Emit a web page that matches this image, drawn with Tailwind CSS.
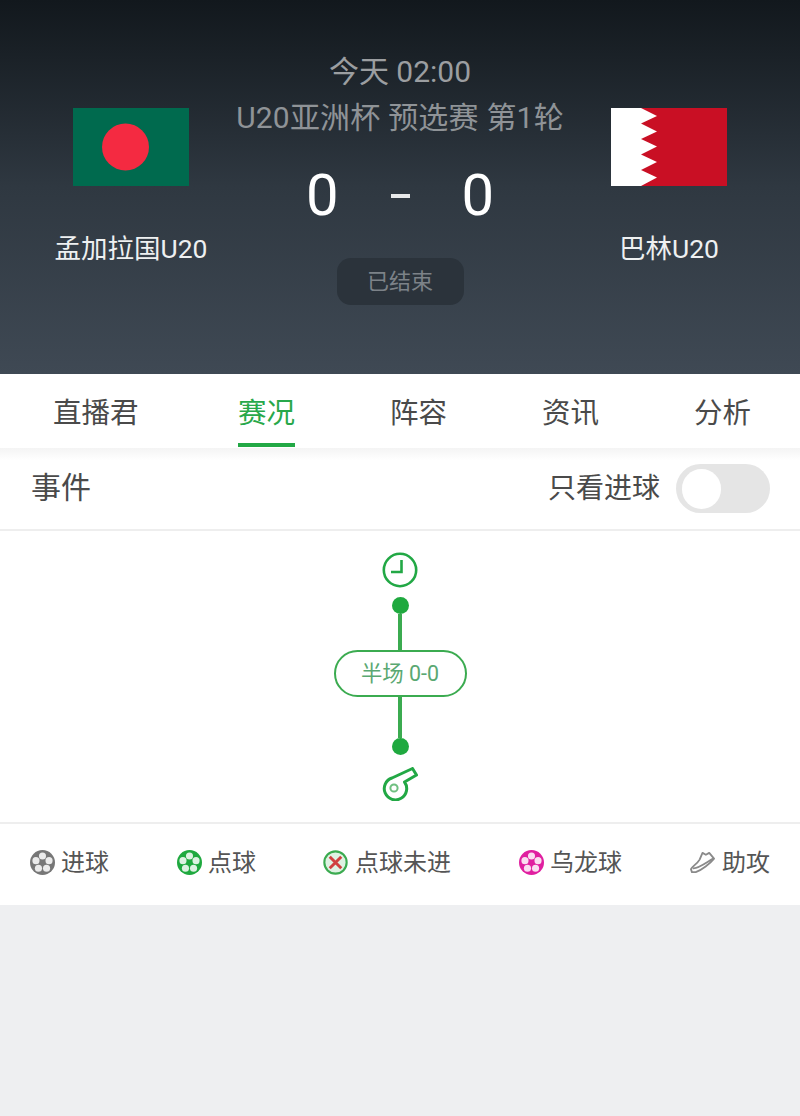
<!DOCTYPE html>
<html>
  <head>
    <title>Match</title>
    <meta charset="UTF-8" />
    <meta name="viewport" content="width=device-width, initial-scale=1.0" />
    <script src="https://cdn.jsdelivr.net/npm/@tailwindcss/browser@4"></script>
  </head>
  <body class="bg-[#eeeff1] h-[1116px] overflow-hidden font-['Roboto','Noto_Sans_CJK_SC',sans-serif]">
    <svg class="hidden">
      <symbol id="ball" viewBox="0 0 26 26">
        <circle cx="13" cy="13" r="13" fill="currentColor" />
        <circle cx="13" cy="6.2" r="3.7" fill="#fff" opacity="0.85" />
        <circle cx="19.8" cy="11.1" r="3.7" fill="#fff" opacity="0.85" />
        <circle cx="17.2" cy="19" r="3.7" fill="#fff" opacity="0.85" />
        <circle cx="8.8" cy="19" r="3.7" fill="#fff" opacity="0.85" />
        <circle cx="6.2" cy="11.1" r="3.7" fill="#fff" opacity="0.85" />
      </symbol>
    </svg>

    <!-- match header -->
    <header class="h-[374px] flex bg-gradient-to-b from-[#12181d] via-[#2f3841] via-50% to-[#3f4954]">
      <div class="w-[262px] shrink-0 flex flex-col items-center pt-[108px]">
        <svg class="w-[116px] h-[78px]" viewBox="0 0 116 78">
          <rect width="116" height="78" fill="#006a4e" />
          <circle cx="52.5" cy="39" r="23.5" fill="#f42a41" />
        </svg>
        <p class="mt-[45px] text-[26.5px] leading-[36px] text-[#eef0f1] whitespace-nowrap">孟加拉国U20</p>
      </div>
      <div class="w-[276px] shrink-0 flex flex-col items-center pt-[52px]">
        <p class="text-[30px] leading-[40px] text-[#9b9ea1] whitespace-nowrap">今天 02:00</p>
        <p class="mt-[6px] text-[30px] tracking-[0.2px] leading-[40px] text-[#8f9397] whitespace-nowrap">U20亚洲杯 预选赛 第1轮</p>
        <div class="mt-[22px] h-[70px] w-[188px] flex items-center justify-between text-white text-[58px] leading-[70px]">
          <span>0</span><span class="w-[19px] h-[4px] mt-[2px] bg-[#e8e9ea]"></span><span>0</span>
        </div>
        <div class="mt-[28px] w-[127px] h-[47px] rounded-[14px] bg-[#2b333b] flex items-center justify-center text-[22px] text-[#7c8288]">已结束</div>
      </div>
      <div class="w-[262px] shrink-0 flex flex-col items-center pt-[108px]">
        <svg class="w-[116px] h-[78px]" viewBox="0 0 116 78">
          <rect width="116" height="78" fill="#c90f24" />
          <polygon points="0,0 30,0 46,8 30,15.6 46,23.4 30,31 46,38.6 30,46.4 46,54 30,62 46,69.6 30,78 0,78" fill="#fff" />
        </svg>
        <p class="mt-[45px] text-[26.5px] leading-[36px] text-[#eef0f1] whitespace-nowrap">巴林U20</p>
      </div>
    </header>

    <!-- tabs -->
    <nav class="h-[74px] bg-white flex pl-[53px] gap-[95px] text-[28.5px] text-[#4a4a4a]">
      <a class="mr-[4.5px] pt-[20px] leading-[40px] whitespace-nowrap">直播君</a>
      <a class="relative pt-[20px] leading-[40px] whitespace-nowrap text-[#28a84a]">赛况<span class="absolute left-0 right-0 bottom-[1px] h-[4px] bg-[#22a845]"></span></a>
      <a class="pt-[20px] leading-[40px] whitespace-nowrap">阵容</a>
      <a class="pt-[20px] leading-[40px] whitespace-nowrap">资讯</a>
      <a class="pt-[20px] leading-[40px] whitespace-nowrap">分析</a>
    </nav>

    <!-- events title -->
    <section class="h-[83px] bg-gradient-to-b from-[#f4f4f4] to-white to-15% border-b-2 border-[#eeeeee] flex items-center pl-[31px] pr-[30px] text-[#4a4a4a]">
      <span class="text-[30px] -mt-[2px]">事件</span>
      <span class="ml-auto text-[28px]">只看进球</span>
      <div class="ml-[16px] w-[94px] h-[49px] rounded-full bg-[#e5e5e5] flex items-center pl-[6px]">
        <div class="w-[39px] h-[40px] rounded-full bg-white"></div>
      </div>
    </section>

    <!-- timeline -->
    <section class="h-[291px] bg-white flex flex-col items-center pt-[21px]">
      <svg class="w-[36px] h-[36px]" viewBox="0 0 36 36" fill="none" stroke="#22a845" stroke-width="2.6">
        <circle cx="18" cy="18" r="16.2" />
        <path d="M19.5 8 V20 H9" />
      </svg>
      <div class="mt-[9px] w-[17px] h-[17px] rounded-full bg-[#1fa93f]"></div>
      <div class="w-[4px] h-[36px] bg-[#3bab50]"></div>
      <div class="w-[133px] h-[47px] pt-[1px] rounded-full border-2 border-[#3bab50] flex items-center justify-center text-[21.4px] text-[#5aa872]">半场 0-0</div>
      <div class="w-[4px] h-[41px] bg-[#3bab50]"></div>
      <div class="w-[17px] h-[17px] rounded-full bg-[#1fa93f]"></div>
      <svg class="mt-[12px] w-[36px] h-[34px]" viewBox="0 0 36 34" fill="none" stroke="#22a845" stroke-width="3" stroke-linejoin="round">
        <path d="M10 11 L30.5 1.5 L34.5 8 L22.5 15 A11.2 11.2 0 1 1 10 11 Z" />
        <circle cx="12" cy="21" r="3.6" stroke-width="2" stroke="#6fbf80" />
      </svg>
    </section>

    <!-- legend -->
    <footer class="h-[83px] bg-white border-t-2 border-[#eeeeee] flex items-center pl-[30px] pb-[4px] text-[24px] text-[#555]">
      <div class="flex items-center gap-[6px] whitespace-nowrap text-[#777]">
        <svg class="w-[25px] h-[25px]"><use href="#ball" /></svg><span class="text-[#555]">进球</span>
      </div>
      <div class="ml-[68px] flex items-center gap-[6px] whitespace-nowrap text-[#1fa93f]">
        <svg class="w-[25px] h-[25px]"><use href="#ball" /></svg><span class="text-[#555]">点球</span>
      </div>
      <div class="ml-[67px] flex items-center gap-[7px] whitespace-nowrap text-[#3bab50]">
        <svg class="w-[25px] h-[25px]" viewBox="0 0 26 26">
          <circle cx="13" cy="13" r="11.6" fill="#dff2e3" stroke="currentColor" stroke-width="2.2" />
          <path d="M7 7 L19 19 M19 7 L7 19" stroke="#d0403f" stroke-width="3" />
        </svg><span class="text-[#555]">点球未进</span>
      </div>
      <div class="ml-[68px] flex items-center gap-[6px] whitespace-nowrap text-[#e01fa0]">
        <svg class="w-[25px] h-[25px]"><use href="#ball" /></svg><span class="text-[#555]">乌龙球</span>
      </div>
      <div class="ml-[68px] flex items-center gap-[7px] whitespace-nowrap">
        <svg class="w-[25px] h-[25px]" viewBox="0 0 26 26" fill="none" stroke="#8a8a8a" stroke-width="1.9" stroke-linejoin="round">
          <path d="M1 20 C3 16 7 15 10 10 L13 3 L16.5 5 L20 3 L25 9 C21 14 12 21 6 23 L2 23 Z" />
          <path d="M3 19 C8 20 17 13 24 9" />
        </svg><span>助攻</span>
      </div>
    </footer>
  </body>
</html>
